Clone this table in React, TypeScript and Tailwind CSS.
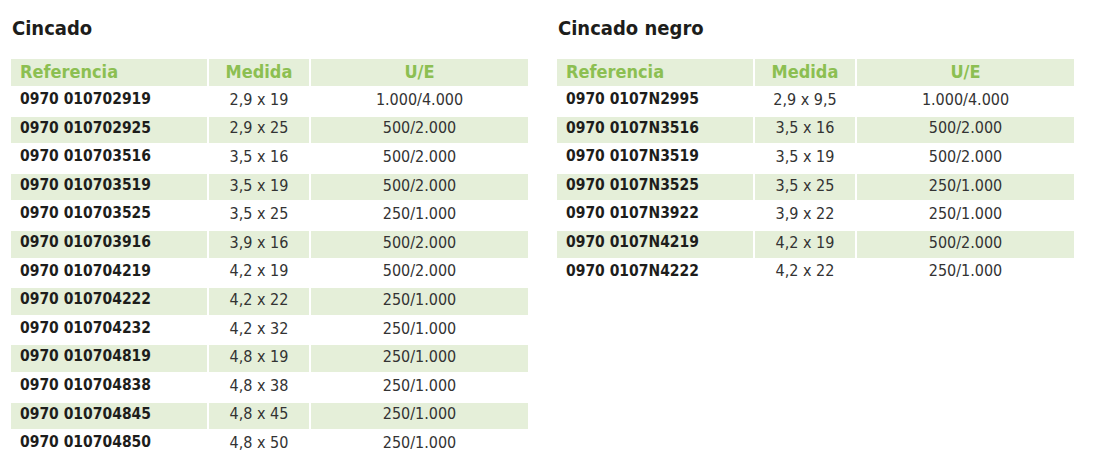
const left = [
  ['0970 010702919', '2,9 x 19', '1.000/4.000'],
  ['0970 010702925', '2,9 x 25', '500/2.000'],
  ['0970 010703516', '3,5 x 16', '500/2.000'],
  ['0970 010703519', '3,5 x 19', '500/2.000'],
  ['0970 010703525', '3,5 x 25', '250/1.000'],
  ['0970 010703916', '3,9 x 16', '500/2.000'],
  ['0970 010704219', '4,2 x 19', '500/2.000'],
  ['0970 010704222', '4,2 x 22', '250/1.000'],
  ['0970 010704232', '4,2 x 32', '250/1.000'],
  ['0970 010704819', '4,8 x 19', '250/1.000'],
  ['0970 010704838', '4,8 x 38', '250/1.000'],
  ['0970 010704845', '4,8 x 45', '250/1.000'],
  ['0970 010704850', '4,8 x 50', '250/1.000'],
]

const right = [
  ['0970 0107N2995', '2,9 x 9,5', '1.000/4.000'],
  ['0970 0107N3516', '3,5 x 16', '500/2.000'],
  ['0970 0107N3519', '3,5 x 19', '500/2.000'],
  ['0970 0107N3525', '3,5 x 25', '250/1.000'],
  ['0970 0107N3922', '3,9 x 22', '250/1.000'],
  ['0970 0107N4219', '4,2 x 19', '500/2.000'],
  ['0970 0107N4222', '4,2 x 22', '250/1.000'],
]

function Table({ title, rows }: { title: string; rows: string[][] }) {
  return (
    <div className="w-[521px]">
      <h2 className="pl-[3px] pt-[13px] text-[20px] font-bold leading-[30px] text-[#1d1d1b]">{title}</h2>
      <table className="mt-[14px] w-full table-fixed border-separate border-spacing-x-[2px] border-spacing-y-[2px]">
        <colgroup>
          <col className="w-[196px]" />
          <col className="w-[100px]" />
          <col />
        </colgroup>
        <thead>
          <tr className="bg-[#e5efd9] text-[18px] leading-none text-[#8cbf52]">
            <th className="h-[27px] pb-[1px] pl-[9px] text-left font-bold">Referencia</th>
            <th className="h-[27px] pb-[1px] text-center font-bold">Medida</th>
            <th className="h-[27px] pb-[1px] text-center font-bold">U/E</th>
          </tr>
        </thead>
        <tbody>
          {rows.map((r, i) => (
            <tr key={r[0]} className={i % 2 === 1 ? 'bg-[#e5efd9]' : ''}>
              <td className="h-[26.6px] pb-[3px] pl-[9px] text-[15.5px] font-bold leading-none text-[#1d1d1b]">{r[0]}</td>
              <td className="h-[26.6px] pb-[3px] text-center text-[16px] leading-none text-[#333333]">{r[1]}</td>
              <td className="h-[26.6px] pb-[3px] text-center text-[16px] leading-none text-[#333333]">{r[2]}</td>
            </tr>
          ))}
        </tbody>
      </table>
    </div>
  )
}

export default function App() {
  return (
    <div
      className="flex h-[467px] w-[1094px] gap-[25px] bg-white pl-[9px]"
      style={{ fontFamily: '"Liberation Sans Narrow", "DejaVu Sans Condensed", "Roboto", sans-serif' }}
    >
      <Table title="Cincado" rows={left} />
      <Table title="Cincado negro" rows={right} />
    </div>
  )
}
